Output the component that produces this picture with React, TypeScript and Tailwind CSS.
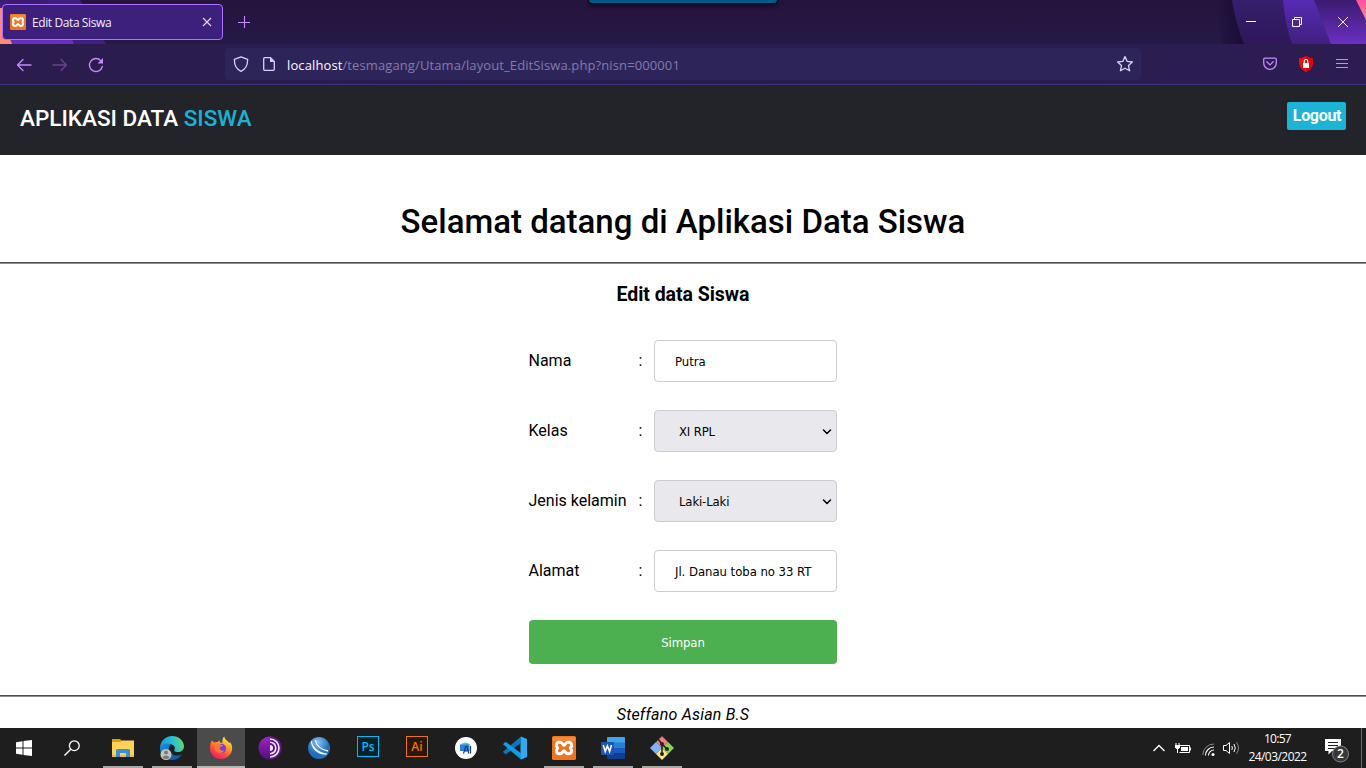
import type { ReactNode } from 'react';

const ui = "font-['Open_Sans','Noto_Sans',sans-serif]";
const formFont = "font-['DejaVu_Sans_Condensed','DejaVu_Sans',sans-serif]";

function XamppMark({ size }: { size: number }) {
  return (
    <svg width={size} height={size} viewBox="0 0 24 24" className="block">
      <rect width="24" height="24" rx="1.5" fill="#ee7420" />
      <rect x="1" y="1" width="22" height="4" fill="#fa9a52" opacity=".6" />
      <path
        d="M12 9.2C13 9.2 13.2 6.2 16.2 6.2 20 6.2 20.6 10 18.4 12 20.6 14 20 17.8 16.2 17.8 13.2 17.8 13 14.8 12 14.8 11 14.8 10.8 17.8 7.8 17.8 4 17.8 3.4 14 5.6 12 3.4 10 4 6.2 7.8 6.2 10.8 6.2 11 9.2 12 9.2Z"
        fill="none"
        stroke="#fff"
        strokeWidth="3.1"
        strokeLinejoin="round"
      />
    </svg>
  );
}

function TitleBar() {
  return (
    <div className="relative h-11 shrink-0 bg-linear-to-b from-[#26143c] to-[#241947]">
      <svg width="1366" height="44" className="absolute inset-0" aria-hidden="true">
        <defs>
          <linearGradient id="bandA" x1="0" y1="0" x2="0" y2="1">
            <stop offset="0" stopColor="#361f6d" />
            <stop offset="1" stopColor="#2f1759" />
          </linearGradient>
          <linearGradient id="bandB" x1="0" y1="0" x2="0" y2="1">
            <stop offset="0" stopColor="#562bb5" />
            <stop offset="1" stopColor="#40207f" />
          </linearGradient>
          <linearGradient id="bandC" x1="0" y1="0" x2="0" y2="1">
            <stop offset="0" stopColor="#3b1b70" />
            <stop offset="1" stopColor="#6b2fc2" />
          </linearGradient>
          <linearGradient id="shade" x1="0" y1="0" x2="1" y2="0">
            <stop offset="0" stopColor="#180d33" stopOpacity="0" />
            <stop offset="1" stopColor="#180d33" />
          </linearGradient>
          <linearGradient id="coral" x1="0" y1="0" x2="0" y2="1">
            <stop offset="0" stopColor="#ff4fa0" />
            <stop offset="1" stopColor="#ff8a78" />
          </linearGradient>
        </defs>
        <path d="M0 0H46Q62 12 78 44H0Z" fill="url(#bandC)" />
        <path d="M46 0H80L106 44H74Q62 14 46 0Z" fill="#40207f" />
        <path d="M0 8V44H12Q4 26 2 8Z" fill="#ff8a78" />
        <path d="M1215 0H1232Q1236 24 1244 44H1222Z" fill="url(#shade)" />
        <path d="M1232 0H1284L1294 44H1244Q1236 24 1232 0Z" fill="url(#bandA)" />
        <path d="M1283 0H1315L1332 44H1292Q1285 24 1283 0Z" fill="url(#bandB)" />
        <path d="M1314 0H1366V44H1331Z" fill="url(#bandC)" />
        <path d="M1356 0H1366V20Z" fill="url(#coral)" />
      </svg>
      <div className="absolute left-[588px] top-0 h-1 w-[190px] rounded-b-[4px] border border-t-0 border-[#070b1c] bg-[#005a8c] shadow-[0_2px_4px_rgba(0,0,0,.6)]" />
      <div className="relative flex h-full items-start">
        <div className="ml-[2px] mt-1 flex h-9 w-[221px] items-center rounded-[4px] border border-[#ab71ff] bg-[#3d1f7c] pl-[7px]">
          <XamppMark size={16} />
          <span className={`${ui} ml-[6px] mt-px whitespace-nowrap text-[12px] tracking-[-0.4px] text-[#f3edff]`}>Edit Data Siswa</span>
          <svg width="10" height="10" viewBox="0 0 10 10" className="ml-auto mr-[10px]">
            <path d="M1 1l8 8M9 1l-8 8" stroke="#e6dcfa" strokeWidth="1.1" />
          </svg>
        </div>
        <svg width="12" height="12" viewBox="0 0 12 12" className="ml-[15px] mt-4">
          <path d="M6.500 0v12M0 6.500h12" stroke="#c689ff" strokeWidth="1.1" />
        </svg>
        <div className="ml-auto mt-[17px] flex gap-9 pr-[18px]">
          <svg width="10" height="10" viewBox="0 0 10 10"><path d="M0 4.5h10" stroke="#fff" /></svg>
          <svg width="10" height="10" viewBox="0 0 10 10">
            <path d="M.5 2.5h7v7h-7zM2.5 2.5v-2h7v7h-2" fill="none" stroke="#fff" />
          </svg>
          <svg width="10" height="10" viewBox="0 0 10 10"><path d="M0 0l10 10M10 0L0 10" stroke="#f3edff" /></svg>
        </div>
      </div>
    </div>
  );
}

function Toolbar() {
  return (
    <div className="flex h-[41px] shrink-0 items-center border-b border-[#40317d] bg-linear-to-r from-[#2c1c4e] via-[#291d4e] to-[#2c1c52]">
      <svg width="16" height="16" viewBox="0 0 16 16" className="ml-4 mt-px">
        <path d="M15 8H1.8M7 2.5L1.5 8 7 13.500" fill="none" stroke="#c689ff" strokeWidth="1.3" strokeLinecap="round" strokeLinejoin="round" />
      </svg>
      <svg width="16" height="16" viewBox="0 0 16 16" className="ml-5 mt-px">
        <path d="M1 8h13.200M9 2.500L14.500 8 9 13.500" fill="none" stroke="#68418f" strokeWidth="1.3" strokeLinecap="round" strokeLinejoin="round" />
      </svg>
      <svg width="16" height="16" viewBox="0 0 16 16" className="ml-5 mt-px">
        <path d="M14.300 9.500A6.500 6.500 0 1 1 12.800 3.600" fill="none" stroke="#c689ff" strokeWidth="1.4" strokeLinecap="round" />
        <path d="M15 1v5.500H9.500z" fill="#c689ff" />
      </svg>
      <div className="ml-[121px] flex h-8 w-[916px] items-center rounded-[4px] bg-[#2d255a]">
        <svg width="16" height="16" viewBox="0 0 16 16" className="ml-2">
          <path d="M8 .8L14.600 3.300C14.800 8.800 12.800 13.200 8 15.300 3.200 13.200 1.200 8.800 1.400 3.300Z" fill="none" stroke="#dcd0f5" strokeWidth="1.3" strokeLinejoin="round" />
        </svg>
        <svg width="12" height="14" viewBox="0 0 12 14" className="ml-[14px]">
          <path d="M1.700.7H7.500L11.300 4.500V12.300Q11.300 13.300 10.300 13.300H1.700Q.7 13.300.7 12.300V1.700Q.7.7 1.700.7Z" fill="none" stroke="#dcd0f5" strokeWidth="1.300" />
          <path d="M7 .7V5h4.300z" fill="#dcd0f5" />
        </svg>
        <span className={`${ui} ml-3 mt-[3px] whitespace-nowrap text-[13px] tracking-[0.11px] text-[#857aab]`}>
          <span className="text-[#fbf8ff]">localhost</span>/tesmagang/Utama/layout_EditSiswa.php?nisn=000001
        </span>
        <svg width="18" height="18" viewBox="0 0 18 18" className="ml-auto mr-[7px]">
          <path d="M9 1.500L11.200 6.400 16.400 7 12.500 10.600 13.600 15.800 9 13.200 4.400 15.800 5.500 10.600 1.600 7 6.800 6.400Z" fill="none" stroke="#dcd0f5" strokeWidth="1.300" strokeLinejoin="round" />
        </svg>
      </div>
      <div className="ml-auto flex items-center pr-[18px]">
        <svg width="14" height="14" viewBox="0 0 14 14">
          <path d="M2 1.200H12Q13.300 1.200 13.300 2.500V6A6.300 6.300 0 0 1 .7 6V2.500Q.7 1.200 2 1.200Z" fill="none" stroke="#c689ff" strokeWidth="1.300" />
          <path d="M3.800 4.800L7 7.900 10.200 4.800" fill="none" stroke="#c689ff" strokeWidth="1.300" strokeLinecap="round" strokeLinejoin="round" />
        </svg>
        <svg width="16" height="16" viewBox="0 0 16 16" className="ml-[21px]">
          <path d="M8 0Q11 2 15 2.200V7Q14.500 13 8 16 1.500 13 1 7V2.200Q5 2 8 0Z" fill="#ed1010" />
          <path d="M8 0Q11 2 15 2.200V7Q14.500 13 8 16Z" fill="#d90808" />
          <rect x="5" y="7" width="6" height="5" fill="#fff" />
          <path d="M6.200 7V5.300a1.800 1.800 0 0 1 3.600 0V7" fill="none" stroke="#fff" strokeWidth="1.200" />
        </svg>
        <svg width="12" height="12" viewBox="0 0 12 12" className="ml-[22px]">
          <path d="M0 1.500h12M0 5.500h12M0 9.500h12" stroke="#c689ff" strokeWidth="1.100" />
        </svg>
      </div>
    </div>
  );
}

function Row({ label, children }: { label: string; children: ReactNode }) {
  return (
    <div className="flex h-[42px] items-center text-[16px]">
      <span className="-ml-[0.5px] w-[110px] whitespace-nowrap">{label}</span>
      <span className="w-[15.5px]">:</span>
      {children}
    </div>
  );
}

function TextBox({ value }: { value: string }) {
  return (
    <div className={`${formFont} flex h-[42px] w-[183px] items-center overflow-hidden whitespace-nowrap rounded-[4px] border border-[#ccc] bg-white px-5 pt-px text-[13px] tracking-[-0.04px]`}>
      {value}
    </div>
  );
}

function SelectBox({ value }: { value: string }) {
  return (
    <div className={`${formFont} flex h-[42px] w-[183px] items-center justify-between rounded-[4px] border border-[#ccc] bg-[#e9e9ed] pl-6 pr-1 pt-px text-[13px] tracking-[-0.15px]`}>
      {value}
      <svg width="10" height="6" viewBox="0 0 10 6">
        <path d="M1.500 1L5 4.500 8.500 1" fill="none" stroke="#000" strokeWidth="1.500" strokeLinecap="round" strokeLinejoin="round" />
      </svg>
    </div>
  );
}

function Page() {
  return (
    <div className="flex h-[643px] shrink-0 flex-col bg-white font-['Roboto',sans-serif] text-black">
      <header className="flex h-[70px] shrink-0 items-start justify-between bg-[#232429] px-5">
        <div className="mt-[18px] whitespace-nowrap text-[22.5px] font-medium leading-[31px] text-white">
          APLIKASI DATA <span className="text-[#1bb1d6]">SISWA</span>
        </div>
        <div className="mt-[17px] flex h-7 w-[59px] items-center justify-center rounded-[2px] bg-[#1cb3d6] pl-px text-[16px] font-bold tracking-[-0.3px] text-white">Logout</div>
      </header>
      <h1 className="mt-[45px] text-center text-[33px] font-medium leading-[44px]">Selamat datang di Aplikasi Data Siswa</h1>
      <div className="mt-[18px] h-[2px] shrink-0 border-t border-[#4e4e50] bg-[#8d8d8f]" />
      <h3 className="mt-[19px] text-center text-[19.5px] font-bold leading-6 tracking-[-0.05px]">Edit data Siswa</h3>
      <main className="mx-auto mt-[33px] flex w-[308px] flex-col gap-7">
        <Row label="Nama"><TextBox value="Putra" /></Row>
        <Row label="Kelas"><SelectBox value="XI RPL" /></Row>
        <Row label="Jenis kelamin"><SelectBox value="Laki-Laki" /></Row>
        <Row label="Alamat"><TextBox value="Jl. Danau toba no 33 RT" /></Row>
        <button className={`${formFont} h-11 rounded-[4px] bg-[#4caf50] pt-px text-[13px] tracking-[-0.1px] text-white`}>Simpan</button>
      </main>
      <div className="mt-[31px] h-[2px] shrink-0 border-t border-[#4e4e50] bg-[#8d8d8f]" />
      <footer className="mt-[6px] text-center text-[16px] italic leading-6 tracking-[0.2px]">Steffano Asian B.S</footer>
    </div>
  );
}

function Slot({ children, open, active }: { children: ReactNode; open?: boolean; active?: boolean }) {
  return (
    <div className={active ? 'flex h-10 w-12 flex-col items-center bg-[#4b4b4b]' : 'flex h-10 w-12 flex-col items-center'}>
      <div className="flex h-[38px] items-center pt-[2px]">{children}</div>
      {active && <div className="h-[2px] w-12 bg-[#bab5ae]" />}
      {open && <div className="h-[2px] w-10 bg-[#aaa7a2]" />}
    </div>
  );
}

function AdobeTile({ label, tone }: { label: string; tone: 'blue' | 'orange' }) {
  return (
    <div className={`${tone === 'blue' ? 'border-[#00bdf2] bg-[#06202c] text-[#00bdf2]' : 'border-[#ed7609] bg-[#2a1603] text-[#ed7609]'} mb-[3px] flex h-[21px] w-[22px] items-center justify-center border font-['Open_Sans',sans-serif] text-[12px] font-semibold leading-none`}>
      {label}
    </div>
  );
}

function Taskbar() {
  return (
    <div className="flex h-10 shrink-0 bg-[#1e1e1e]">
      <div className="flex w-12 items-center justify-center">
        <svg width="16" height="16" viewBox="0 0 16 16">
          <path d="M0 2.200L6.500 1.300V7.500H0zM7.500 1.100L16 0V7.500H7.500zM0 8.500h6.500v6.200L0 13.800zM7.500 8.500H16V16l-8.500-1.100z" fill="#fff" />
        </svg>
      </div>
      <div className="flex w-12 items-center justify-center">
        <svg width="16" height="16" viewBox="0 0 16 16">
          <circle cx="10.300" cy="5.700" r="4.900" fill="none" stroke="#fff" strokeWidth="1.300" />
          <path d="M6.800 9.200L.5 15.500" stroke="#fff" strokeWidth="1.400" />
        </svg>
      </div>
      <div className="ml-[3px] flex gap-px">
        <Slot open>
          <svg width="22" height="18" viewBox="0 0 22 18">
            <path d="M0 0h8l2 2H22V6H0z" fill="#dc9a1c" />
            <path d="M0 3H8L10 1.500H22V18H0z" fill="#ffd257" />
            <path d="M0 16h22v2H0z" fill="#f5bd3e" />
            <path d="M4 18V11.500Q4 10 5.500 10h11Q18 10 18 11.500V18H14V14H8v4z" fill="#3a8fd4" />
          </svg>
        </Slot>
        <Slot open>
          <svg width="24" height="24" viewBox="0 0 24 24">
            <defs>
              <linearGradient id="edgeTop" x1="0" y1=".5" x2="1" y2=".3">
                <stop offset="0" stopColor="#1598da" /><stop offset=".55" stopColor="#28bfd2" /><stop offset="1" stopColor="#6ddb60" />
              </linearGradient>
              <linearGradient id="edgeLow" x1="0" y1="0" x2="1" y2="1">
                <stop offset="0" stopColor="#1b8fdc" /><stop offset="1" stopColor="#0e4f9c" />
              </linearGradient>
            </defs>
            <path d="M0 12A12 12 0 0 1 12 0C19 0 24 5 24 10.500 24 14 21 16 18 16 15 16 13.500 15 14.500 13.500 16 10.500 13 8 9 8 5 8 1.500 10 0 12Z" fill="url(#edgeTop)" />
            <path d="M0 12C2 7 8 6.500 11 8.500 8 11 8 15 12 18 15 20 19 20 22 18 20 22 16.500 24 12 24 5 24 0 19 0 12Z" fill="url(#edgeLow)" />
            <circle cx="6" cy="18.500" r="5.500" fill="#c4c4c4" />
            <circle cx="6" cy="16.600" r="2" fill="#7a7a7a" />
            <path d="M2.500 22Q3 19.500 6 19.500T9.500 22Q6 24 2.500 22Z" fill="#7a7a7a" />
          </svg>
        </Slot>
        <Slot active>
          <svg width="24" height="24" viewBox="0 0 24 24">
            <defs>
              <linearGradient id="fox" x1=".8" y1="0" x2=".25" y2="1">
                <stop offset="0" stopColor="#fff44f" /><stop offset=".35" stopColor="#ffa82b" /><stop offset=".65" stopColor="#ff5333" /><stop offset="1" stopColor="#ed1577" />
              </linearGradient>
            </defs>
            <path d="M2.800 4.500L5.300 6.500Q7 5.800 8.500 6.200L10.500 4.300 11 6.800 13.500 6.500C13 3.500 14 1.500 15.300.5 15.800 4 19 4.500 20.200 7.200L21 6C23.300 9 23.500 12 22.900 14.500 21.500 20 17 23 12 23 5.500 23 1 18 1 12.500 1 9 1.500 6.500 2.800 4.500Z" fill="url(#fox)" />
            <circle cx="12.500" cy="12.400" r="4.600" fill="#7541d9" />
            <path d="M5.300 8.500Q9 6.500 11.500 8.500L14.500 9.500 10.500 11.500C10.500 14 13 15.300 15 14.300 14 18 8 18 6 14Z" fill="#ff7732" />
          </svg>
        </Slot>
        <Slot>
          <svg width="24" height="24" viewBox="0 0 24 24">
            <defs><linearGradient id="onion" x1="0" y1="0" x2="0" y2="1"><stop offset="0" stopColor="#a020c8" /><stop offset="1" stopColor="#521079" /></linearGradient></defs>
            <circle cx="12" cy="12" r="11.500" fill="url(#onion)" />
            <path d="M12 12V.8A11.200 11.200 0 0 1 12 23.200Z" fill="#5f1487" />
            <path d="M12 3A9 9 0 0 1 12 21M12 6.200A5.800 5.800 0 0 1 12 17.800" fill="none" stroke="#f4e6fa" strokeWidth="1.600" />
            <path d="M12 9a3 3 0 0 1 0 6z" fill="#f4e6fa" />
          </svg>
        </Slot>
        <Slot>
          <svg width="22" height="22" viewBox="0 0 22 22">
            <defs><radialGradient id="orb" cx=".45" cy=".25"><stop offset="0" stopColor="#8bc2f4" /><stop offset="1" stopColor="#2270bd" /></radialGradient></defs>
            <circle cx="11" cy="11" r="11" fill="url(#orb)" />
            <path d="M3.500 4C4 10 10 15.500 19 17 11 18.500 3 12 3.500 4Z" fill="#fff" stroke="#fff" strokeWidth=".6" />
            <path d="M7.500 3C8 8 12.500 12.500 20 14" fill="none" stroke="#fff" strokeWidth="1.300" />
          </svg>
        </Slot>
        <Slot><AdobeTile label="Ps" tone="blue" /></Slot>
        <Slot><AdobeTile label="Ai" tone="orange" /></Slot>
        <Slot>
          <svg width="22" height="22" viewBox="0 0 22 22">
            <circle cx="11" cy="11" r="11" fill="#fff" />
            <path d="M6 8a5 4.500 0 0 1 9 0z" fill="#3ddc84" />
            <path d="M5 7.500H14.500V14H5z" fill="#2f7cf0" />
            <path d="M8.500 16.500L10.800 9.500h1.200l1.800 7M9.300 14h4M15.500 9v7.500" fill="none" stroke="#123d67" strokeWidth="1.200" />
          </svg>
        </Slot>
        <Slot>
          <svg width="24" height="24" viewBox="0 0 24 24">
            <path d="M18 .5L24 3V21L18 23.500 17.500 18V6Z" fill="#2fa9f2" />
            <path d="M18 .5V6.800L3 18.200 1.500 17.500 0 15.700Z" fill="#0879c2" />
            <path d="M0 8.300L2 6.200 3 6 18 17.200V23.500Z" fill="#169be5" />
          </svg>
        </Slot>
        <Slot open><XamppMark size={24} /></Slot>
        <Slot open>
          <svg width="24" height="22" viewBox="0 0 24 22">
            <path d="M6 1Q6 0 7 0H23Q24 0 24 1V6H6z" fill="#41a5ee" />
            <path d="M6 5.500h18V11H6z" fill="#2b7cd3" />
            <path d="M6 11h18v5.500H6z" fill="#185abd" />
            <path d="M6 16.500h18V21q0 1-1 1H7q-1 0-1-1z" fill="#103f91" />
            <rect y="5" width="13" height="13" rx="1" fill="#1956b5" />
            <path d="M2.300 8L4.200 14.500 6.400 9 8.600 14.500 10.500 8" fill="none" stroke="#fff" strokeWidth="1.600" />
          </svg>
        </Slot>
        <Slot open>
          <svg width="24" height="24" viewBox="0 0 24 24">
            <path d="M12 .7L17.500 6 12 11.500 6.500 6Z" fill="#f87c80" stroke="#f87c80" strokeLinejoin="round" />
            <path d="M18 6L24 12 18 18 12 12Z" fill="#8bd254" />
            <path d="M6 6L12 12 6 18 0 12Z" fill="#80b3ff" />
            <path d="M12 12L18 18 12 24 6 18Z" fill="#ffe680" />
            <path d="M8 3L12 8V18.500M12 8L17 13" fill="none" stroke="#2a2521" strokeWidth="1.600" />
            <circle cx="12" cy="8" r="2" fill="#2a2521" /><circle cx="17" cy="13" r="2" fill="#2a2521" /><circle cx="12" cy="18" r="2" fill="#2a2521" />
          </svg>
        </Slot>
      </div>
      <div className="ml-auto flex items-center text-white">
        <svg width="14" height="8" viewBox="0 0 14 8" className="mr-[9px]"><path d="M1.500 7L7 1.500 12.500 7" fill="none" stroke="#fff" strokeWidth="1.300" /></svg>
        <svg width="16" height="13" viewBox="0 0 16 13" className="mr-[11px]">
          <path d="M4.500 3.500H14.500V10.500H4.500M15.500 5.500v3" fill="none" stroke="#fff" />
          <path d="M6 5h7v4H6z" fill="#fff" />
          <path d="M1 1v2M4 1v2M2.500 6v5" fill="none" stroke="#fff" />
          <path d="M0 3h5v2.500L3.500 7h-2L0 5.500z" fill="#fff" />
        </svg>
        <svg width="14" height="13" viewBox="0 0 14 13" className="mr-[7px] mt-[2px]">
          <path d="M.8 12A11 11 0 0 1 12 1" fill="none" stroke="#888" />
          <path d="M3.500 12.500A8.500 8.500 0 0 1 12 4M6.500 12.500A5.500 5.500 0 0 1 12 7" fill="none" stroke="#fff" strokeWidth="1.100" />
          <circle cx="11" cy="11.500" r="1.500" fill="#fff" />
        </svg>
        <svg width="17" height="14" viewBox="0 0 17 14">
          <path d="M.5 4.500h2.500L6.500 1.500v11L3 9.500H.5z" fill="none" stroke="#fff" />
          <path d="M8.800 5Q10 7 8.800 9M11 3Q13.500 7 11 11" fill="none" stroke="#fff" />
          <path d="M13.500 1.200Q17.500 7 13.500 12.800" fill="none" stroke="#8a8a8a" />
        </svg>
        <div className={`${ui} ml-2 mr-px flex w-[59px] flex-col items-center whitespace-nowrap text-[12px] leading-[18px]`}>
          <span className="tracking-[-0.7px]">10:57</span>
          <span className="tracking-[-0.55px]">24/03/2022</span>
        </div>
        <svg width="25" height="26" viewBox="0 0 25 26" className="ml-[17px] mt-[6px]">
          <path d="M0 1H16V13H7L3.500 16.500V13H0Z" fill="#fff" />
          <path d="M3 4.500h10M3 7.500h10M3 10.500h7" stroke="#1e1e1e" />
          <circle cx="15.500" cy="16" r="8" fill="#383838" stroke="#858585" />
          <text x="15.500" y="20.300" textAnchor="middle" fontFamily="Open Sans" fontSize="12" fontWeight="600" fill="#fff">2</text>
        </svg>
        <div className="ml-[11px] mr-1 h-10 w-px bg-[#6b6b6b]" />
      </div>
    </div>
  );
}

export default function App() {
  return (
    <div className="flex h-[768px] w-[1366px] flex-col overflow-hidden">
      <TitleBar />
      <Toolbar />
      <Page />
      <Taskbar />
    </div>
  );
}
